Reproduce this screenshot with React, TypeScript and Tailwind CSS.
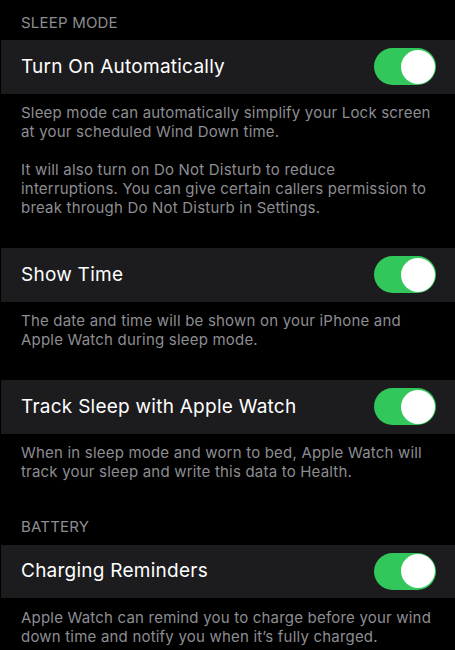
const font = { fontFamily: "Inter, 'Noto Sans', sans-serif" };

function Toggle() {
  return (
    <div className="flex h-[37px] w-[62px] items-center justify-end rounded-full bg-[#32c75a] p-[1.5px]">
      <div className="h-[34px] w-[34px] rounded-full bg-white" />
    </div>
  );
}

function Header({ label, className = "" }: { label: string; className?: string }) {
  return (
    <p className={`pl-[21px] text-[15px] leading-[20px] tracking-[0.2px] uppercase text-[#8d8d92] ${className}`}>
      {label}
    </p>
  );
}

function Row({ title }: { title: string }) {
  return (
    <div className="ml-px flex h-[53.5px] items-center justify-between bg-[#1c1c1e] pl-[20px] pr-[19px]">
      <span className="text-[19px] text-white tracking-[0.25px]">{title}</span>
      <Toggle />
    </div>
  );
}

function Footer({ paragraphs }: { paragraphs: string[] }) {
  return (
    <div className="space-y-[19px] pl-[21px] pr-[20px] pb-[31px] pt-[9.5px] text-[15px] leading-[19px] tracking-[0.2px] text-[#8d8d92]">
      {paragraphs.map((p) => (
        <p key={p}>{p}</p>
      ))}
    </div>
  );
}

export default function App() {
  return (
    <div className="h-[650px] w-[455px] overflow-hidden bg-black pt-[13px]" style={font}>
      <Header label="Sleep Mode" className="mb-[7px]" />
      <Row title="Turn On Automatically" />
      <Footer
        paragraphs={[
          "Sleep mode can automatically simplify your Lock screen at your scheduled Wind Down time.",
          "It will also turn on Do Not Disturb to reduce interruptions. You can give certain callers permission to break through Do Not Disturb in Settings.",
        ]}
      />
      <Row title="Show Time" />
      <Footer
        paragraphs={[
          "The date and time will be shown on your iPhone and Apple Watch during sleep mode.",
        ]}
      />
      <Row title="Track Sleep with Apple Watch" />
      <Footer
        paragraphs={[
          "When in sleep mode and worn to bed, Apple Watch will track your sleep and write this data to Health.",
        ]}
      />
      <Header label="Battery" className="mt-[5px] mb-[7.5px]" />
      <Row title="Charging Reminders" />
      <Footer
        paragraphs={[
          "Apple Watch can remind you to charge before your wind down time and notify you when it’s fully charged.",
        ]}
      />
    </div>
  );
}
